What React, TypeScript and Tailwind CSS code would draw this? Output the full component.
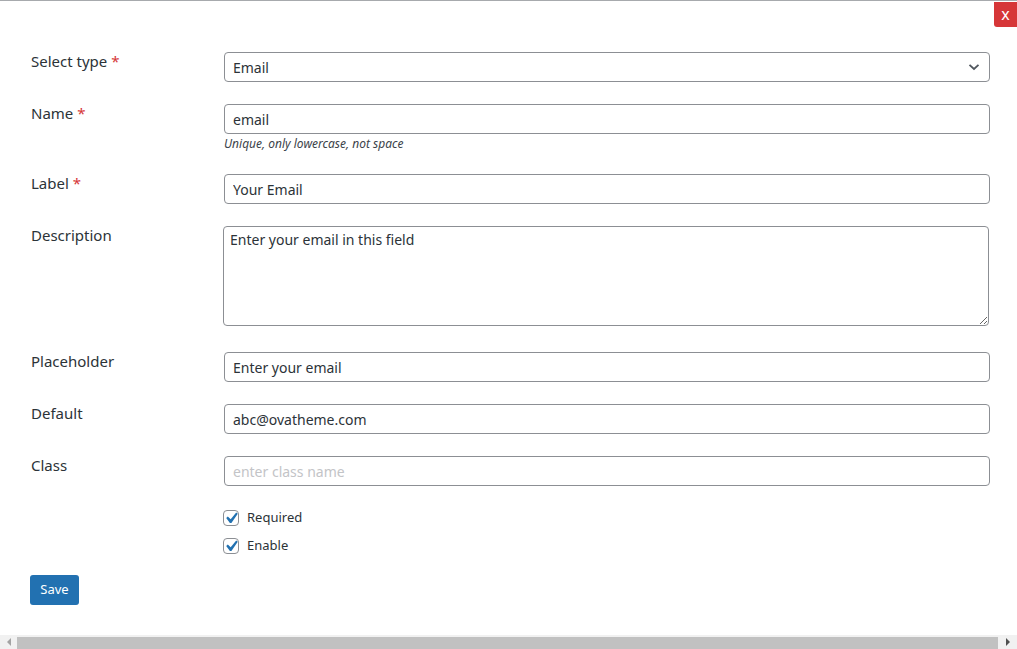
import React from "react";

const font = { fontFamily: '"Noto Sans", "Open Sans", Arial, sans-serif' };

function Label({ text, req }: { text: string; req?: boolean }) {
  return (
    <div className="w-[193px] shrink-0 text-[15px] leading-[21px] text-[#2c3338] mt-[-1px]">
      {text}
      {req && <span className="text-[#d63638]"> *</span>}
    </div>
  );
}

function Input({ value, placeholder }: { value?: string; placeholder?: string }) {
  return (
    <input
      readOnly
      defaultValue={value}
      placeholder={placeholder}
      className="w-[766px] h-[30px] border border-[#8c8f94] rounded-[4px] px-[8px] text-[14px] text-[#2c3338] placeholder:text-[#c3c4c7] outline-none bg-white"
      style={font}
    />
  );
}

function Check({ text }: { text: string }) {
  return (
    <div className="flex items-center h-[16px]">
      <div className="w-[16px] h-[16px] border border-[#8c8f94] rounded-[4px] flex items-center justify-center bg-white overflow-visible">
        <svg width="20" height="20" viewBox="0 0 20 20" className="shrink-0 -mt-[1px]">
          <path d="M15.2 4.6l1.6 1.1-6.4 9.2H8.9L5.2 10.1l1.6-1.5 2.9 2.7z" fill="#2271b1" />
        </svg>
      </div>
      <span className="ml-[8px] text-[13px] text-[#2c3338]">{text}</span>
    </div>
  );
}

export default function App() {
  return (
    <div className="w-[1017px] h-[649px] bg-white flex flex-col overflow-hidden relative" style={font}>
      <div className="h-[1px] bg-[#a7aaad] shrink-0" />
      <button className="absolute right-0 top-[2px] w-[23px] h-[25px] bg-[#d63638] text-white text-[16px] leading-[25px] rounded-bl-[3px] flex items-center justify-center">
        x
      </button>
      <div className="flex-1 pl-[31px] pt-[51px]">
        <div className="flex items-start mb-[22px]">
          <Label text="Select type" req />
          <div className="w-[766px] h-[30px] border border-[#8c8f94] rounded-[4px] px-[8px] flex items-center justify-between text-[14px] text-[#2c3338]">
            <span>Email</span>
            <svg width="12" height="8" viewBox="0 0 12 8" className="mr-[1px]">
              <path d="M1.5 1.8 L6 6 L10.5 1.8" stroke="#50575e" strokeWidth="1.8" fill="none" />
            </svg>
          </div>
        </div>
        <div className="flex items-start mb-[22px]">
          <Label text="Name" req />
          <div>
            <Input value="email" />
            <div className="h-[18px] text-[12px] italic text-[#3c434a] leading-[20px]">Unique, only lowercase, not space</div>
          </div>
        </div>
        <div className="flex items-start mb-[22px]">
          <Label text="Label" req />
          <Input value="Your Email" />
        </div>
        <div className="flex items-start mb-[26px]">
          <Label text="Description" />
          <textarea
            readOnly
            defaultValue="Enter your email in this field"
            className="ml-[-1px] w-[766px] h-[100px] border border-[#8c8f94] rounded-[4px] px-[6px] py-[2px] text-[14px] text-[#2c3338] outline-none block"
            style={font}
          />
        </div>
        <div className="flex items-start mb-[22px]">
          <Label text="Placeholder" />
          <Input value="Enter your email" />
        </div>
        <div className="flex items-start mb-[22px]">
          <Label text="Default" />
          <Input value="abc@ovatheme.com" />
        </div>
        <div className="flex items-start">
          <Label text="Class" />
          <Input placeholder="enter class name" />
        </div>
        <div className="ml-[192px] mt-[24px] flex flex-col gap-[12px]">
          <Check text="Required" />
          <Check text="Enable" />
        </div>
        <button className="mt-[21px] ml-[-1px] w-[49px] h-[30px] bg-[#2271b1] rounded-[3px] text-white text-[13px]">
          Save
        </button>
      </div>
      <div className="h-[14px] bg-[#f1f1f1] flex items-stretch shrink-0">
        <div className="w-[17px] flex items-center justify-center">
          <svg width="6" height="8" viewBox="0 0 6 8"><path d="M5 0 L1 4 L5 8Z" fill="#a3a3a3" /></svg>
        </div>
        <div className="flex-1 bg-[#c1c1c1] mt-[2px]" />
        <div className="w-[19px] flex items-center justify-center">
          <svg width="6" height="8" viewBox="0 0 6 8"><path d="M1 0 L5 4 L1 8Z" fill="#505050" /></svg>
        </div>
      </div>
    </div>
  );
}
